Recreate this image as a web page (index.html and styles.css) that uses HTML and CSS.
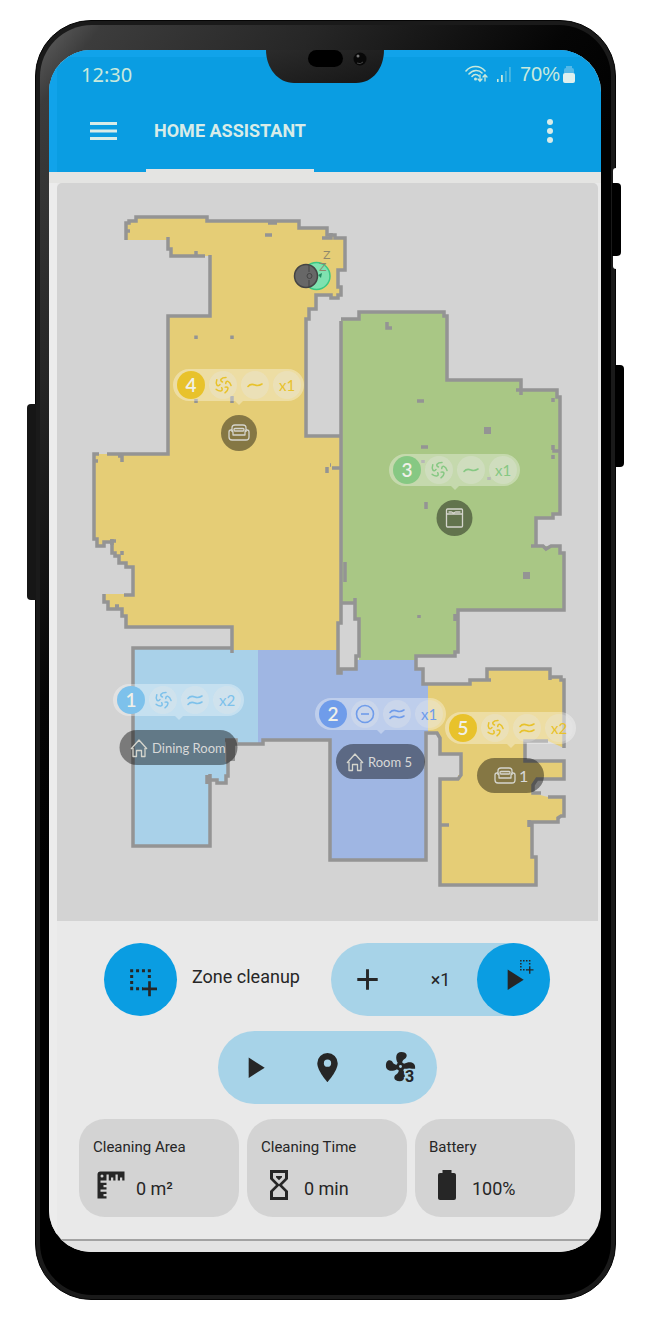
FILE: index.html
```html
<!DOCTYPE html>
<html lang="en">
<head>
<meta charset="utf-8">
<meta name="viewport" content="width=device-width, initial-scale=1">
<title>Home Assistant</title>
<link rel="stylesheet" href="styles.css">
</head>
<body>
<div class="phone">
  <span class="side side-left"></span>
  <span class="groove"></span>
  <span class="side side-power"></span>
  <span class="side side-volume"></span>
  <div class="bezel">
  <div class="screen">
    <svg class="notch" viewBox="0 0 118 34" aria-hidden="true">
      <defs><linearGradient id="notchFill" x1="0" y1="0" x2="1" y2="1"><stop offset="0" stop-color="#2b2b2b"/><stop offset="1" stop-color="#161616"/></linearGradient></defs>
      <path d="M0 0C0 18 12 33 28 33H90C107 33 118 18 118 0Z" fill="url(#notchFill)"/>
      <rect x="42" y="0" width="35" height="17" rx="8.500" fill="#000"/>
      <circle cx="94" cy="9" r="6.500" fill="#080808"/><circle cx="92" cy="6" r="1.500" fill="#777"/><path d="M91 13a5 5 0 0 0 6-1" stroke="#444" fill="none"/>
    </svg>

    <header class="appbar">
      <div class="status">
        <time class="clock">12:30</time>
        <div class="status-right">
          <svg class="wifi" viewBox="0 0 23 18" aria-hidden="true">
            <g fill="none" stroke="currentColor" stroke-width="1.600" stroke-linecap="round"><path d="M1 6C6 0 15 0 20 6M4 9C8 4.500 14 4.500 17 8M7 11.500C9 9 12 9 14 11"/><path d="M15 10v6m-2-2 2 2.300 2-2.300M20 16v-6m-2 2 2-2.300L22 12" stroke-width="1.300"/></g><circle cx="10.500" cy="14" r="1.500" fill="currentColor"/>
          </svg>
          <svg class="signal" viewBox="0 0 14 16" aria-hidden="true"><path d="M0 13h1.600v3H0zM4 9h1.800v7H4z" fill="currentColor"/><path d="M8 5h1.800v11H8zM12 1h1.800v15H12z" fill="currentColor" opacity=".35"/></svg>
          <span class="percent">70%</span>
          <svg class="cell" viewBox="0 0 12 17" aria-hidden="true"><path d="M1 7V4q0-2 2-2V0h6v2q2 0 2 2v3z" fill="#55b9e8"/><rect x="0" y="7" width="12" height="10" rx="2" fill="#dff0ee"/></svg>
        </div>
      </div>
      <nav class="tabs">
        <button class="icon-button" type="button" aria-label="Open menu"><svg viewBox="0 0 28 20"><path d="M0 2.500h27M0 10h27M0 17.500h27" stroke="currentColor" stroke-width="3"/></svg></button>
        <a class="tab" href="#home">HOME ASSISTANT</a>
        <button class="icon-button more" type="button" aria-label="More options"><svg viewBox="0 0 6 26"><circle cx="3" cy="4" r="3" fill="currentColor"/><circle cx="3" cy="13" r="3" fill="currentColor"/><circle cx="3" cy="22" r="3" fill="currentColor"/></svg></button>
      </nav>
    </header>

    <main class="content" id="home">
      <svg class="map" viewBox="57 183 541 738" role="img" aria-label="Floor map">
        <defs>
          <g id="swirl" fill="none" stroke="currentColor" stroke-width="1.500" stroke-linecap="round">
            <path id="blade" d="M-.5-3C-4-4.500-2-7.500 3-7.500"/>
            <use href="#blade" transform="rotate(72)"/><use href="#blade" transform="rotate(144)"/><use href="#blade" transform="rotate(216)"/><use href="#blade" transform="rotate(288)"/>
          </g>
          <path id="wave" d="M-7 1.500C-5-1-2.500-1 0 0S4.500 .5 7-1" fill="none" stroke="currentColor" stroke-width="1.600" stroke-linecap="round"/>
          <g id="waves"><use href="#wave" y="-3"/><use href="#wave" y="3"/></g>
          <g id="pill">
            <path d="M16-16H115A16 16 0 0 1 115 16H70L66 20 62 16H16A16 16 0 0 1 16-16Z" class="pill-bg"/>
            <circle cx="50" r="14" class="pill-dot"/><circle cx="82" r="14" class="pill-dot"/><circle cx="114" r="14" class="pill-dot"/><circle cx="18" r="14" fill="currentColor"/>
          </g>
          <g id="house" class="line-icon"><path d="M-8 1 0-8 8 1M-6 0V8.500H-2.500V2.500H2.500V8.500H6V0"/></g>
          <g id="sofa" class="line-icon"><path d="M-7-1V-5Q-7-8-4-8H4Q7-8 7-5V-1M-10-1Q-10-3-8-3T-6 0V2H6V0Q6-3 8-3T10-1V4Q10 7 7 7H-7Q-10 7-10 4Z"/><rect x="-5" y="-4.500" width="10" height="2.500" rx="1"/></g>
          <g id="fridge" class="line-icon"><rect x="-8" y="-9" width="16" height="18" rx="1"/><path d="M-8-4H8M-6-6h3l2 1 2-1h5"/></g>
        </defs>

        <path class="living" d="M126 240V223H129V221H136V217H207V221H299V228H327V235H335V238H345V270H338V287H341V295H338V298H331V295H316V309H309V319H306V436H341V623H338V651H232V627H126V616H122V609H108V602H104V594H133V567H126V563H119V556H115V553H112V542H104V546H97V539H94V454H168V316H210V256H171V249H168V240Z"/>
        <path class="bedroom" d="M341 319H359V312H444V316H447V380H521V390H557V397H560V514H553V518H536V546H560V553H564V610H458V652H455V656H416V661H359V619H355V603H341Z"/>
        <path class="dining" d="M133 648H232V650H259V744H236V740H225V762H228V776H226V783H217V780H210V846H133Z"/>
        <path class="hall" d="M258 650H338V673H341V669H356V660H416V669H423V684H428V733H426V860H330V740H263V744H258Z"/>
        <path class="living" d="M428 684H470V680H487V669H550V677H561V680H564V748L548 741H525V761H564V779H537L532 793 548 797H564V816H561V818H558V822H532V857H536V885H440V779H458V775H461V754H440V738L437 733H428Z"/>

        <g class="walls">
          <path d="M126 240V223H129V221H136V217H207V221H299V228H327V235H335V238H345V270H338V287H341V295H338V298H331V295H316V309H309V319H306V436H341"/>
          <path d="M322 238H331V233M268 223H277M265 235H272M126 231H130M168 237V249H171V256H205M196 256V251M210 255V316H168V454H107M122 454V462M118 456H122M99 454H94V539H97V546H104V542H112V553H115V556H119V563H126V567H133V595H124M98 461H95M104 594V602H108V609H122V616H126V627H232V653M110 541H116M115 606H119"/>
          <path d="M341 321V623H338V673H341V669H356V656H359V619H355V598M342 603H355M345 562V582M341 319H359V312H444V316H447V380H521V395M516 390H557V397H560V514H553V518H536V546H543L546 549 551 546H560V553H564V610H458V652H455V656H416V669H423V684H470V680H491M487 680V669H550V680M550 677H561V680H564V748M455 614V621M554 450V451H560M531 546H536M341 468H332M330 465H331M327 467V473"/>
          <path d="M232 648H133V846H210V774M207 775V784M210 780H217V783H226V776H228V762M228 739V762M225 740H236V744H263V740H330V860H426V733H437L440 738V754H461V775L458 779H440V885H536V857H532V822M529 820V827M528 822H558V818L561 816H564V797H548M440 825H449M548 741H525V761H564V779H537L533 785V793H541"/>
          <path d="M196 335.500v3.500M232 335.500v3.500M196 399v4M232 396v7M122 551v4M112 539V545M387 322V328H392M417 401H424M421 447H428M426 502V509M553 398v4M553 455v4M553 445V450M419 615v3M423 460v3M489 477v3"/>
        </g>
        <path class="pillar" d="M484 427h7v7h-7zM523 572h7v7h-7zM225 739h10v22h-7z"/>

        <circle cx="316.500" cy="276" r="13.500" fill="#7fe2b0" stroke="#3bc783" stroke-width="1.500"/>
        <circle cx="306" cy="276" r="11.500" fill="#676767" stroke="#444" stroke-width="1.500"/>
        <path d="M309 265V272M309 280V287" stroke="#444"/><circle cx="309.500" cy="276" r="2.500" fill="none" stroke="#444"/>
        <path d="M318 275l4-2-1 5z" fill="#208d61"/>
        <text class="snooze" x="323" y="259">Z</text><text class="snooze" x="319" y="271">Z</text>

        <g class="tone-yellow" transform="translate(173 385)"><use href="#pill"/><text class="badge" x="18" y="7">4</text><use href="#swirl" x="50"/><use href="#wave" x="82"/><text class="times" x="114" y="6">x1</text></g>
        <g class="tone-green" transform="translate(389 470)"><use href="#pill"/><text class="badge" x="18" y="7">3</text><use href="#swirl" x="50"/><use href="#wave" x="82"/><text class="times" x="114" y="6">x1</text></g>
        <g class="tone-sky" transform="translate(113 700)"><use href="#pill"/><text class="badge" x="18" y="7">1</text><use href="#swirl" x="50"/><use href="#waves" x="82"/><text class="times" x="114" y="6">x2</text></g>
        <g class="tone-blue" transform="translate(315 714)"><use href="#pill"/><text class="badge" x="18" y="7">2</text><circle cx="50" r="8.500" class="ring"/><path d="M46 0H54" class="ring"/><use href="#waves" x="82"/><text class="times" x="114" y="6">x1</text></g>
        <g class="tone-yellow" transform="translate(445 728)"><use href="#pill"/><text class="badge" x="18" y="7">5</text><use href="#swirl" x="50"/><use href="#waves" x="82"/><text class="times" x="114" y="6">x2</text></g>

        <g><circle cx="239" cy="433" r="18" class="tag"/><use href="#sofa" x="239" y="433"/></g>
        <g><circle cx="454.500" cy="518" r="18" class="tag"/><use href="#fridge" x="454.500" y="518"/></g>
        <g><rect x="119.500" y="730" width="118" height="35" rx="17.500" class="tag"/><use href="#house" x="139" y="748"/><text class="tag-text" x="152" y="753">Dining Room</text></g>
        <g><rect x="336" y="744" width="89" height="35" rx="17.500" class="tag"/><use href="#house" x="355" y="762"/><text class="tag-text" x="368" y="767">Room 5</text></g>
        <g><rect x="477" y="758" width="67" height="35" rx="17.500" class="tag"/><use href="#sofa" x="505" y="776"/><text class="tag-text tag-number" x="519" y="782">1</text></g>
      </svg>

      <section class="controls">
        <div class="zone-row">
          <button class="round" type="button" id="zone" aria-labelledby="zone-label">
            <svg viewBox="0 0 105 105"><g id="zone-icon"><path d="M26 21.500V86M21.500 26H88M21.500 80H60M79 21.500V53" fill="none" stroke="currentColor" stroke-width="9" stroke-dasharray="9 8.700"/><path d="M79.500 58V103M58 80.500H102" stroke="currentColor" stroke-width="8"/></g></svg>
          </button>
          <span class="zone-label" id="zone-label">Zone cleanup</span>
          <div class="group">
            <button class="slot" type="button" aria-label="Add zone"><svg viewBox="0 0 24 24"><path d="M19 13H13V19H11V13H5V11H11V5H13V11H19Z" fill="currentColor"/></svg></button>
            <button class="slot" type="button" aria-label="Repeats">×1</button>
            <button class="round" type="button" aria-label="Start zone cleanup">
              <svg viewBox="0 0 24 24"><path d="M8 5.140V19.140L19 12.140Z" fill="currentColor"/></svg>
              <svg class="mini" viewBox="15 15 90 90" aria-hidden="true"><use href="#zone-icon"/></svg>
            </button>
          </div>
        </div>
        <div class="group">
          <button class="slot" type="button" aria-label="Start"><svg viewBox="0 0 24 24"><path d="M8 5.140V19.140L19 12.140Z" fill="currentColor"/></svg></button>
          <button class="slot" type="button" aria-label="Locate"><svg viewBox="0 0 24 24"><path d="M12 11.500A2.500 2.500 0 0 1 9.500 9 2.500 2.500 0 0 1 12 6.500 2.500 2.500 0 0 1 14.500 9 2.500 2.500 0 0 1 12 11.500M12 2A7 7 0 0 0 5 9C5 14.250 12 22 12 22S19 14.250 19 9A7 7 0 0 0 12 2Z" fill="currentColor"/></svg></button>
          <button class="slot" type="button" aria-label="Fan speed 3"><svg class="fan" viewBox="0 0 24 26"><path fill="currentColor" d="M12,11A1,1 0 0,0 11,12A1,1 0 0,0 12,13A1,1 0 0,0 13,12A1,1 0 0,0 12,11M12.500,2C17,2 17.110,5.570 14.750,6.750C13.760,7.240 13.320,8.290 13.130,9.220C13.610,9.420 14.030,9.730 14.350,10.130C18.050,8.130 22.030,8.920 22.030,12.500L22 13.500H14.500C14.590,13.590 14.280,14 13.880,14.340C15.870,18.030 15.080,22 11.500,22C7,22 6.910,18.420 9.270,17.240C10.250,16.750 10.690,15.710 10.890,14.790C10.400,14.590 9.970,14.270 9.650,13.870C5.960,15.850 2,15.070 2,11.500C2,7 5.560,6.890 6.740,9.260C7.240,10.250 8.290,10.680 9.220,10.870C9.410,10.390 9.730,9.970 10.140,9.650C8.150,5.960 8.940,2 12.500,2Z"/><text class="speed" x="15" y="22.500">3</text></svg></button>
        </div>
        <div class="stats">
          <article class="card"><h2>Cleaning Area</h2><p><svg viewBox="0 0 24 24" aria-hidden="true"><path fill="currentColor" d="M3,5V21H9V19.500H7V18H9V16.500H5V15H9V13.500H7V12H9V10.500H5V9H9V5H10.500V9H12V7H13.500V9H15V5H16.500V9H18V7H19.500V9H21V3H5A2,2 0 0,0 3,5M6,7A1,1 0 0,1 5,6A1,1 0 0,1 6,5A1,1 0 0,1 7,6A1,1 0 0,1 6,7Z"/></svg><span>0 m²</span></p></article>
          <article class="card"><h2>Cleaning Time</h2><p><svg viewBox="0 0 24 24" aria-hidden="true"><path fill="currentColor" d="M6,2H18V8L14,12L18,16V22H6V16L10,12L6,8V2M16,16.500L12,12.500L8,16.500V20H16V16.500M12,11.500L16,7.500V4H8V7.500L12,11.500M10,6H14V6.750L12,8.750L10,6.750V6Z"/></svg><span>0 min</span></p></article>
          <article class="card"><h2>Battery</h2><p><svg viewBox="0 0 24 24" aria-hidden="true"><path fill="currentColor" d="M16.670,4H15V2H9V4H7.330A1.330,1.330 0 0,0 6,5.330V20.670C6,21.400 6.600,22 7.330,22H16.670A1.330,1.330 0 0,0 18,20.670V5.330C18,4.600 17.400,4 16.670,4Z"/></svg><span>100%</span></p></article>
        </div>
      </section>
    </main>
    <footer class="dock"></footer>
  </div>
  </div>
</div>
</body>
</html>
```
FILE: styles.css
```css
* { box-sizing: border-box; }
body { margin: 0; background: #fff; font-family: Roboto, "Noto Sans", sans-serif; color: #262626; }
button { border: 0; padding: 0; margin: 0; background: none; color: inherit; font: inherit; cursor: pointer; }
svg { display: block; }

.phone { position: relative; margin: 20px 36px 20px 35px; padding: 4px; border-radius: 56px; background: #1a1a1a; border: 1px solid #050505; }
.bezel { padding: 25px 10px 43px 9px; border-radius: 52px; background: linear-gradient(128deg, #626262 0, #3c3c3c 4%, #262626 18%, #050505 34%, #000 42%); }
.side { position: absolute; background: #0c0c0c; }
.side-left { left: -9px; top: 383px; width: 9px; height: 196px; background: #161616; border-radius: 4px 0 0 4px; }
.groove { position: absolute; right: -1px; top: 147px; width: 3px; height: 101px; background: #fff; border-radius: 3px 0 0 3px; }
.side-power { right: -6px; top: 162px; width: 9px; height: 73px; background: #000; border-radius: 0 4px 4px 0; }
.side-volume { right: -9px; top: 344px; width: 9px; height: 102px; background: #000; border-radius: 0 4px 4px 0; }

.screen { position: relative; overflow: hidden; border-radius: 42px; background: #e9e9e9; }
.notch { position: absolute; left: 217px; top: 0; width: 118px; height: 34px; }

.appbar { background: #0a9de2; color: #d8ece8; box-shadow: inset 8px 7px 0 #11a3ea; }
.status { display: flex; justify-content: space-between; align-items: center; padding: 9px 26px 9px 32px; height: 48px; font-size: 20px; }
.clock { font-family: "Noto Sans", sans-serif; color: #c9e9dc; }
.status-right { display: flex; align-items: center; gap: 9px; font-family: "Liberation Sans", sans-serif; color: #c9e9dc; }
.wifi { width: 23px; height: 18px; }
.signal { width: 14px; height: 16px; }
.cell { width: 12px; height: 17px; margin-left: -6px; }
.tabs { display: flex; align-items: stretch; height: 74px; padding: 0 48px 0 41px; }
.icon-button { display: flex; align-items: center; padding-bottom: 9px; }
.icon-button svg { width: 28px; height: 20px; }
.icon-button.more { margin-left: auto; }
.icon-button.more svg { width: 6px; height: 26px; }
.tab { display: flex; align-items: center; margin-left: 28px; padding: 0 8px 6px; border-bottom: 3px solid #e4e4e2; color: inherit; font-size: 18px; font-weight: 700; text-decoration: none; }

.content { padding: 11px 3px 0 8px; box-shadow: inset 0 11px 0 #e4e4e2, inset 8px 0 0 #ececec; }
.map { width: 100%; height: auto; background: #d3d3d3; border-radius: 5px 5px 0 0; }
.living { fill: #e5cd76; }
.bedroom { fill: #a9c785; }
.dining { fill: #a9d1e9; }
.hall { fill: #9fb6e3; }
.walls { fill: none; stroke: #949494; stroke-width: 3.5; stroke-linecap: butt; stroke-linejoin: miter; }
.pillar { fill: #949494; }
.pill-bg { fill: #fff; opacity: .33; }
.pill-dot { fill: #e8e8e8; opacity: .3; }
.tone-yellow { color: #e8c22b; }
.tone-green { color: #86c883; }
.tone-sky { color: #7dc1eb; }
.tone-blue { color: #6f9cea; }
.badge { fill: #f0f0e8; font: 600 19px Lato, sans-serif; text-anchor: middle; }
.times { fill: currentColor; font: 15px Lato, sans-serif; text-anchor: middle; }
.ring { fill: none; stroke: currentColor; stroke-width: 1.6; }
.tag { fill: #000; opacity: .42; }
.line-icon { fill: none; stroke: #d5d5cd; stroke-width: 1.3; stroke-linejoin: round; }
.tag-text { fill: #d8d8d8; font: 13px Lato, sans-serif; }
.tag-number { font-size: 16px; }
.snooze { fill: #8f886c; font: 11px "DejaVu Sans", sans-serif; }

.controls { display: flex; flex-direction: column; align-items: center; gap: 15px; padding: 22px 23px 22px 22px; }
.zone-row { display: flex; align-items: center; align-self: stretch; padding: 0 25px; }
.zone-label { margin: 0 auto 6px 15px; font-size: 18px; line-height: 24px; }
.round { position: relative; display: grid; place-items: center; flex: none; width: 73px; height: 73px; border-radius: 50%; background: #0a9de2; }
.round svg, .slot svg { width: 35px; height: 35px; }
.round .mini { position: absolute; right: 16px; top: 16px; width: 15px; height: 15px; }
.slot .fan { height: 38px; }
.group { display: flex; border-radius: 37px; background: #a7d3e8; }
.slot { display: grid; place-items: center; width: 73px; height: 73px; font-size: 18px; }
.speed { font: 700 11px Roboto, sans-serif; fill: currentColor; stroke: #a7d3e8; stroke-width: 2px; paint-order: stroke; }
.stats { display: grid; grid-template-columns: repeat(3, 1fr); gap: 8px; align-self: stretch; }
.card { padding: 18px 14px 14px; border-radius: 26px; background: #d3d3d3; }
.card h2 { margin: 0 0 10px; font-size: 15px; font-weight: 400; line-height: 20px; }
.card p { display: flex; align-items: center; gap: 7px; margin: 0; font-size: 18px; line-height: 24px; }
.card svg { width: 36px; height: 36px; }
.card span { padding-top: 8px; }
.dock { height: 13px; border-top: 2px solid #a2a2a2; background: #e3e3e3; }
```
